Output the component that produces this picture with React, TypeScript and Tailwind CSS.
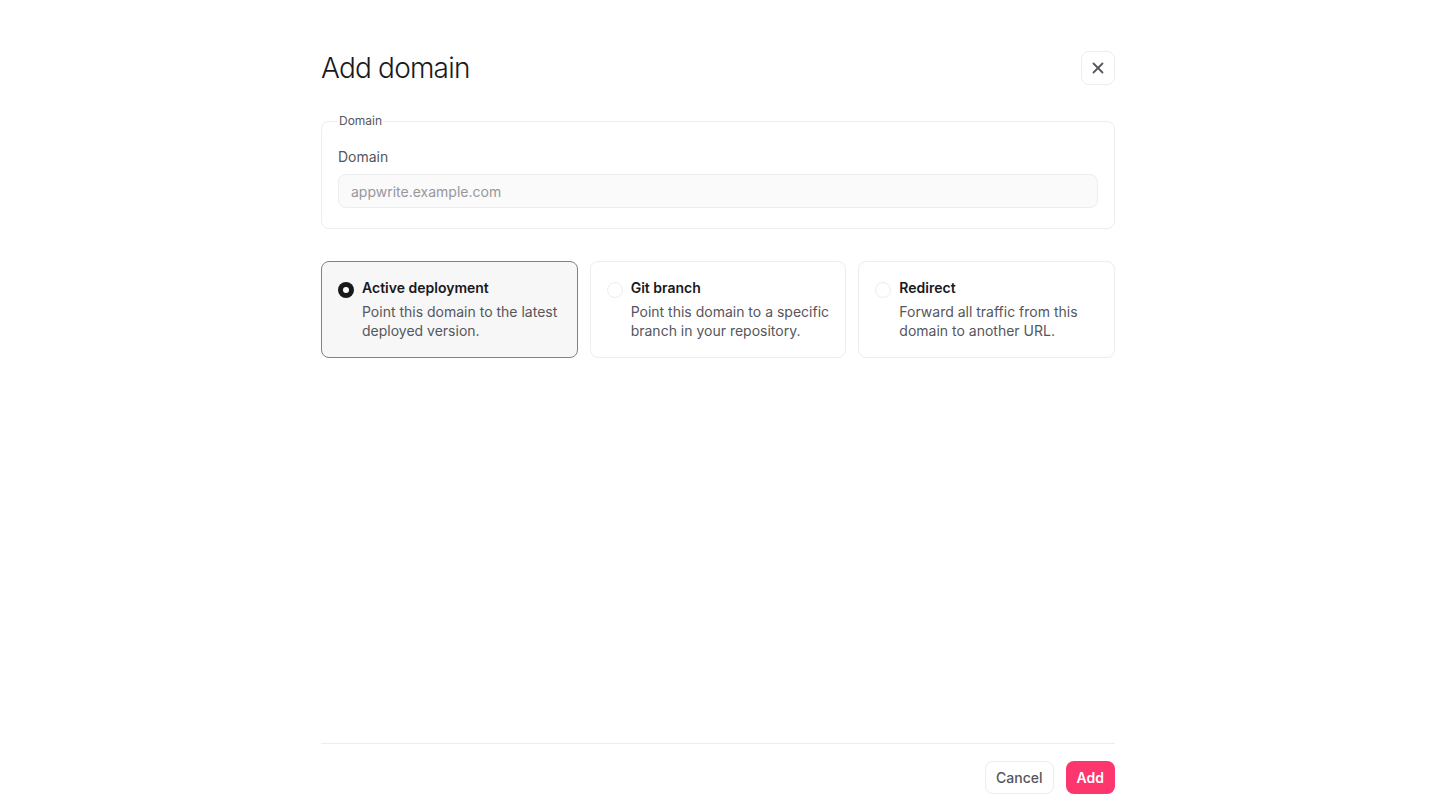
import React from "react";

function Radio({ checked }: { checked: boolean }) {
  return checked ? (
    <span className="mt-[4px] flex h-4 w-4 shrink-0 items-center justify-center rounded-full bg-[#19191c]">
      <span className="h-[6px] w-[6px] rounded-full bg-white" />
    </span>
  ) : (
    <span className="mt-[4px] h-4 w-4 shrink-0 rounded-full border border-[#ededf0] bg-white" />
  );
}

function Card({ title, desc, checked }: { title: string; desc: React.ReactNode; checked: boolean }) {
  return (
    <div
      className={
        "flex h-[97px] gap-2 rounded-lg px-4 pt-[16px] " +
        (checked ? "border border-[#818186] bg-[#f7f7f7]" : "border border-[#ededf0] bg-white")
      }
    >
      <Radio checked={checked} />
      <div className="flex flex-col">
        <div className="text-[14px] font-semibold leading-[20px] text-[#19191c]">{title}</div>
        <div className="mt-[4px] text-[14px] leading-[19px] text-[#56565c]">{desc}</div>
      </div>
    </div>
  );
}

export default function App() {
  return (
    <div className="flex h-[810px] w-full justify-center bg-white font-['Inter',sans-serif]">
      <div className="ml-[-4px] flex w-[794px] flex-col">
        <div className="flex items-center justify-between pt-[51px]">
          <h1 className="text-[28px] font-light leading-[34px] tracking-[-0.8px] text-[#19191c]">Add domain</h1>
          <button className="flex h-[34px] w-[34px] items-center justify-center rounded-lg border border-[#ededf0] bg-white text-[#56565c]">
            <svg width="16" height="16" viewBox="0 0 16 16" fill="none" stroke="currentColor" strokeWidth="1.8" strokeLinecap="round">
              <path d="M3.5 3.5 12.5 12.5M12.5 3.5 3.5 12.5" />
            </svg>
          </button>
        </div>

        <fieldset className="mt-[28px] rounded-lg border border-[#ededf0] px-4 pb-[20px]">
          <legend className="ml-0 px-[1px] text-[12px] leading-[16px] text-[#56565c]">Domain</legend>
          <div className="mt-[18px] text-[14px] leading-[20px] text-[#56565c]">Domain</div>
          <input
            className="mt-[7px] h-[34px] w-full rounded-lg border border-[#ededf0] bg-[#fafafb] px-3 text-[14px] text-[#19191c] outline-none placeholder:text-[#97979b]"
            placeholder="appwrite.example.com"
          />
        </fieldset>

        <div className="mt-[32px] grid grid-cols-3 gap-3">
          <Card checked title="Active deployment" desc={<>Point this domain to the latest<br />deployed version.</>} />
          <Card checked={false} title="Git branch" desc={<>Point this domain to a specific<br />branch in your repository.</>} />
          <Card checked={false} title="Redirect" desc={<>Forward all traffic from this<br />domain to another URL.</>} />
        </div>

        <div className="flex-1" />

        <div className="border-t border-[#ededf0] pt-[17px] pb-[16px]">
          <div className="flex justify-end gap-3">
            <button className="h-[33px] rounded-lg border border-[#ededf0] bg-white px-[10px] text-[14px] font-medium text-[#56565c]">Cancel</button>
            <button className="h-[33px] rounded-lg bg-[#fd366e] px-[11px] text-[14px] font-semibold text-white">Add</button>
          </div>
        </div>
      </div>
    </div>
  );
}
